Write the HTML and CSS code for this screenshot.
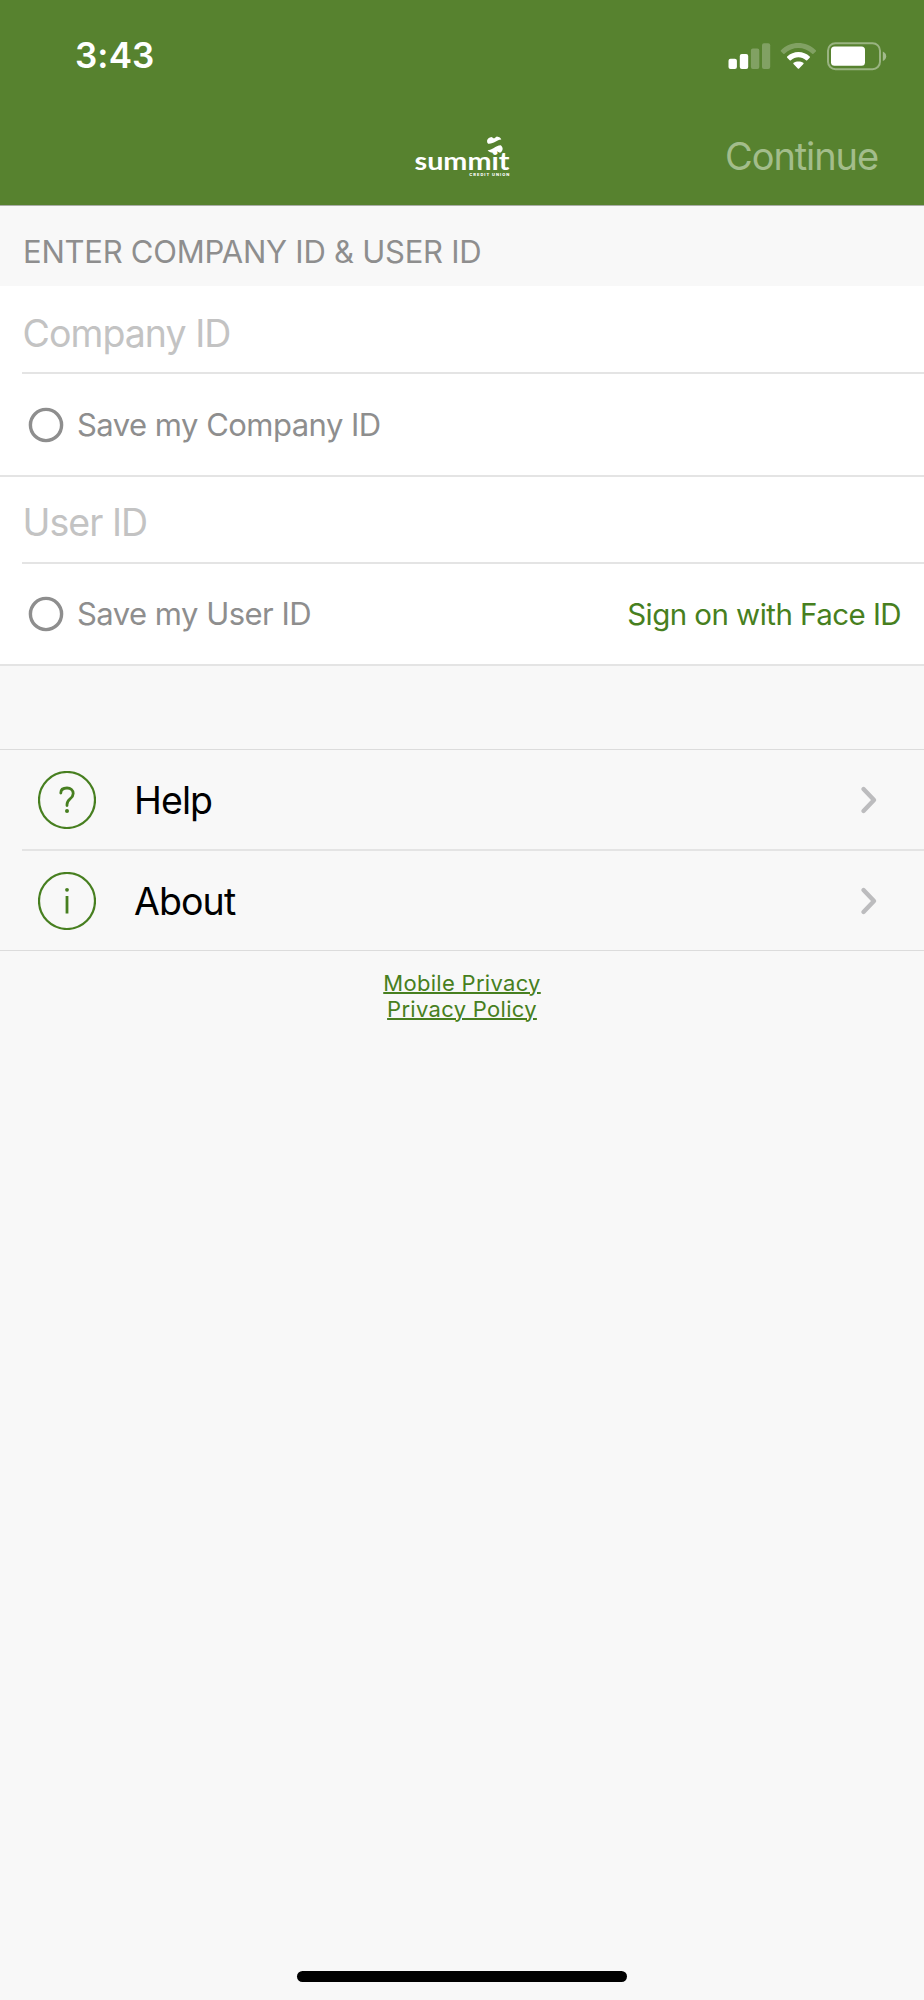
FILE: index.html
```html
<!DOCTYPE html>
<html lang="en">
<head>
<meta charset="utf-8">
<title>Summit Credit Union</title>
<link rel="stylesheet" href="styles.css">
</head>
<body>
<div class="screen">
  <header class="header">
    <div class="status">
      <span class="time">3:43</span>
      <svg class="status-icons" width="160" height="30" viewBox="728 40 160 30" fill="#fff">
        <rect x="728.5" y="57.7" width="8.4" height="10.4" rx="2"/>
        <rect x="739.8" y="53" width="8.4" height="15.1" rx="2"/>
        <g opacity=".25"><rect x="750.9" y="47.6" width="8.4" height="20.5" rx="2"/><rect x="762" y="42.2" width="8.2" height="25.9" rx="2"/></g>
        <path opacity=".25" d="M781 49.3C790.5 39.6 806 39.6 815.8 49.3Q816.4 50 815.8 50.6L813.4 52.7Q812.8 53.2 812.2 52.7C804.3 45.2 792.3 45.2 784.5 52.7Q783.9 53.2 783.3 52.7L781 50.6Q780.4 50 781 49.3Z"/>
        <path d="M787.2 55.6C793.2 49.5 803.7 49.5 809.7 55.6Q810.3 56.2 809.7 56.8L807.2 59.2Q806.6 59.7 806 59.2C801.5 55.2 795.3 55.2 790.9 59.2Q790.3 59.7 789.7 59.2L787.2 56.8Q786.6 56.2 787.2 55.6Z"/>
        <path d="M793.6 61.8C796.3 59.9 800.6 59.9 803.3 61.8Q804 62.4 803.4 63L799.1 67.5Q798.45 68.2 797.8 67.5L793.5 63Q792.9 62.4 793.6 61.8Z"/>
        <rect x="828" y="42.2" width="52" height="26" rx="7.5" fill="none" stroke="#fff" stroke-width="2" opacity=".4"/>
        <rect x="831" y="45.6" width="34" height="19.2" rx="3.5"/>
        <path opacity=".45" d="M882.8 50.4Q886.2 52 886.2 55.2T882.8 60Z"/>
      </svg>
    </div>
    <div class="nav">
      <svg class="logo" width="98" height="44" viewBox="413 133 98 44" fill="#fff">
        <text class="logo-name" x="414.5" y="169.3" textLength="95" lengthAdjust="spacingAndGlyphs">summit</text>
        <path d="M488.200 142.800C486 140.500 487 136.800 491.500 136L494 137.400L496.800 135.500C499.500 135.800 500.800 137 501.300 138.600C496.500 138.800 494 143.200 488.200 142.800Z"/>
        <path d="M487.600 149.200C492.500 149.200 495 144.600 500.800 144.200C503.600 146.400 503.200 150.200 500 151.800L497.300 150.400L494.500 152C491.500 152 489 151 487.600 149.200Z"/>
        <text class="logo-sub" x="469.3" y="175.4" textLength="40" lengthAdjust="spacing">CREDIT UNION</text>
      </svg>
      <span class="continue">Continue</span>
    </div>
  </header>
  <main>
    <h1 class="caption">ENTER COMPANY ID &amp; USER ID</h1>
    <section class="form">
      <div class="field"><span>Company ID</span></div>
      <div class="save">
        <svg class="radio" width="36" height="36" viewBox="0 0 36 36"><circle cx="18" cy="18" r="15.600"/></svg>
        <span>Save my Company ID</span>
      </div>
      <div class="field user"><span>User ID</span></div>
      <div class="save last">
        <svg class="radio" width="36" height="36" viewBox="0 0 36 36"><circle cx="18" cy="18" r="15.600"/></svg>
        <span>Save my User ID</span>
        <a class="face">Sign on with Face ID</a>
      </div>
    </section>
    <nav class="menu">
      <div class="item">
        <svg class="badge" width="58" height="58" viewBox="0 0 58 58">
          <circle cx="29" cy="29" r="28"/>
          <path d="M22.8 22C22.8 18.7 25.3 17 29 17C32.7 17 35.2 19.1 35.2 22.5C35.2 28 29 27.5 29 33.5V34.500"/>
          <circle class="dot" cx="29" cy="40" r="2"/>
        </svg>
        <span>Help</span>
        <svg class="chevron" width="20" height="30" viewBox="0 0 20 30"><path d="M4.5 4L15 15L4.5 26"/></svg>
      </div>
      <div class="item">
        <svg class="badge" width="58" height="58" viewBox="0 0 58 58">
          <circle cx="29" cy="29" r="28"/>
          <path class="stem" d="M29 24V41.5"/>
          <circle class="dot" cx="29" cy="17.8" r="1.9"/>
        </svg>
        <span>About</span>
        <svg class="chevron" width="20" height="30" viewBox="0 0 20 30"><path d="M4.5 4L15 15L4.5 26"/></svg>
      </div>
    </nav>
    <div class="links">
      <a>Mobile Privacy</a>
      <a>Privacy Policy</a>
    </div>
  </main>
  <div class="home"></div>
</div>
</body>
</html>
```
FILE: styles.css
```css
* { box-sizing: border-box; }
body { margin: 0; font-family: Inter, "Liberation Sans", sans-serif; background: #f8f8f8; white-space: nowrap; }
.screen { width: 924px; height: 2000px; display: flex; flex-direction: column; background: #f8f8f8; }
.header { height: 206px; background: #57822f; border-bottom: 1px solid #aaaea7; color: #fff; }
.status { height: 111px; display: flex; align-items: center; justify-content: space-between; padding: 0 36px 0 75px; }
.time { padding-bottom: 2px; font-size: 35px; font-weight: 600; letter-spacing: 0.1px; }
.nav { height: 90px; display: grid; grid-template-columns: 1fr 98px 1fr; align-items: center; padding: 0 46px; }
.logo { grid-column: 2; }
.logo-name { font-family: Lato, sans-serif; font-weight: 700; font-size: 25px; }
.logo-sub { font-family: Inter, sans-serif; font-weight: 800; font-size: 4px; }
.continue { justify-self: end; font-size: 38px; letter-spacing: -1.1px; color: #a3bd8b; }
.caption { margin: 0; height: 80px; padding: 10px 0 0 23px; display: flex; align-items: center; font-size: 31px; font-weight: 400; letter-spacing: -0.24px; color: #8e8e8e; }
.form { background: #fff; }
.field { height: 88px; margin-left: 22px; padding: 8px 0 0 0.5px; display: flex; align-items: center; border-bottom: 2px solid #e4e4e4; font-size: 37.5px; letter-spacing: -0.95px; color: #c3c3c3; }
.field.user { height: 87px; padding-top: 6px; }
.save { height: 103px; padding: 0 23px 0 28px; display: flex; align-items: center; border-bottom: 2px solid #e4e4e4; font-size: 31px; letter-spacing: -0.52px; color: #8e8e8e; }
.save.last { height: 102px; padding-bottom: 1px; }
.radio { margin-right: 13px; fill: none; stroke: #8e8e8e; stroke-width: 3.4; }
.face { margin-left: auto; font-size: 29.5px; letter-spacing: -0.55px; color: #477f20; }
.menu { margin-top: 83px; border-top: 1px solid #dcdcdc; border-bottom: 1px solid #dcdcdc; }
.item { height: 99px; display: flex; align-items: center; padding: 0 45px 0 38px; font-size: 37.5px; letter-spacing: -0.9px; color: #000; }
.item + .item { height: 101px; padding-left: 16px; margin-left: 22px; border-top: 2px solid #e4e4e4; }
.item span { padding-top: 1px; }
.badge { margin-right: 38px; fill: none; stroke: #477f20; stroke-width: 2.2; }
.badge path { stroke-width: 2.8; stroke-linecap: round; }
.badge .stem { stroke-linecap: butt; }
.badge .dot { fill: #477f20; stroke: none; }
.chevron { margin-left: auto; fill: none; stroke: #bcbcbe; stroke-width: 4.4; stroke-linecap: round; stroke-linejoin: round; }
.links { padding-top: 20px; display: flex; flex-direction: column; align-items: center; font-size: 22px; line-height: 25.5px; letter-spacing: 0.3px; color: #477f20; }
.links a { text-decoration: underline; text-decoration-thickness: 2px; }
.home { width: 330px; height: 11px; margin: auto auto 18px; border-radius: 6px; background: #000; }
```
